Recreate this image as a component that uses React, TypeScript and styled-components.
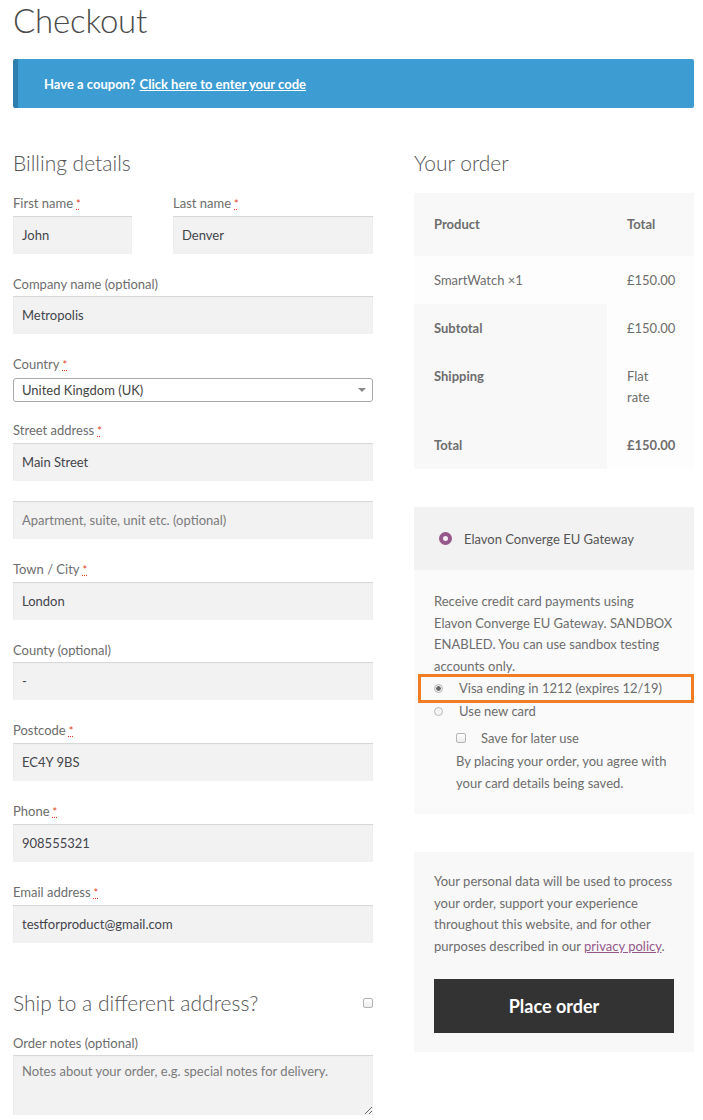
import React from 'react'
import styled, { createGlobalStyle } from 'styled-components'

const GlobalStyle = createGlobalStyle`
  * { box-sizing: border-box; }
  body {
    margin: 0;
    background: #ffffff;
    font-family: Lato, 'Open Sans', sans-serif;
    color: #6d6d6d;
  }
`

const Page = styled.div`
  width: 703px;
  padding: 0 9px 0 13px;
`

const PageTitle = styled.h1`
  margin: 0;
  font-size: 33px;
  font-weight: 300;
  line-height: 40px;
  color: #4a4a4a;
  letter-spacing: -0.2px;
`

const Coupon = styled.div`
  margin-top: 19px;
  height: 49px;
  display: flex;
  align-items: center;
  padding-left: 26px;
  background: #3d9cd2;
  border-left: 5px solid #2e7fb0;
  border-radius: 2px;
  font-size: 13px;
  font-weight: 700;
  color: #ffffff;

  a {
    color: #ffffff;
    text-decoration: underline;
    margin-left: 4px;
  }
`

const Columns = styled.div`
  display: grid;
  grid-template-columns: 360px 280px;
  column-gap: 41px;
  margin-top: 41px;
`

const Column = styled.div`
  display: flex;
  flex-direction: column;
`

const SectionTitle = styled.h3<{ $top?: number }>`
  margin: ${p => p.$top ?? 0}px 0 16px;
  font-size: 21px;
  font-weight: 300;
  line-height: 28px;
  color: #555555;
  display: flex;
  align-items: center;
  justify-content: space-between;
`

const Row = styled.div`
  display: grid;
  grid-template-columns: 119px 200px;
  column-gap: 41px;
`

const Field = styled.div<{ $gap?: number }>`
  display: flex;
  flex-direction: column;
  margin-bottom: ${p => p.$gap ?? 20}px;
`

const Label = styled.label`
  font-size: 13px;
  line-height: 20px;
  margin-bottom: 2px;
  color: #6d6d6d;

  abbr {
    color: #e2401c;
    text-decoration: underline dotted;
    margin-left: 3px;
    font-size: 11px;
  }
`

const Input = styled.input`
  height: 38px;
  width: 100%;
  border: 0;
  padding: 0 9px;
  background: #f2f2f2;
  box-shadow: inset 0 1px 1px rgba(0, 0, 0, 0.12);
  font-family: inherit;
  font-size: 13px;
  color: #43454b;
  outline: none;

  &::placeholder {
    color: #7b7b7b;
  }
`

const SelectBox = styled.div`
  margin-top: 1px;
  height: 24px;
  border: 1px solid #aaaaaa;
  border-radius: 3px;
  background: #ffffff;
  display: flex;
  align-items: center;
  justify-content: space-between;
  padding: 0 6px 0 8px;
  font-size: 13px;
  color: #444444;
`

const Caret = styled.span`
  width: 0;
  height: 0;
  border-left: 4px solid transparent;
  border-right: 4px solid transparent;
  border-top: 4px solid #888888;
`

const Checkbox = styled.span<{ $size?: number }>`
  display: inline-block;
  width: ${p => p.$size ?? 10}px;
  height: ${p => p.$size ?? 10}px;
  border: 1px solid #b5b5b5;
  border-radius: 2px;
  background: linear-gradient(#ffffff, #ececec);
`

const TextArea = styled.textarea`
  height: 60px;
  width: 100%;
  border: 0;
  padding: 8px 9px;
  background: #f2f2f2;
  box-shadow: inset 0 1px 1px rgba(0, 0, 0, 0.12);
  font-family: inherit;
  font-size: 13px;
  color: #43454b;
  outline: none;
  resize: vertical;

  &::placeholder {
    color: #7b7b7b;
  }
`

const OrderTable = styled.div`
  display: grid;
  grid-template-columns: 193px 87px;
  font-size: 13px;
  line-height: 21px;
`

const Cell = styled.div<{ $head?: boolean; $bold?: boolean; $bg: string }>`
  padding: ${p => (p.$head ? '21px' : '13.5px')} 20px;
  background: ${p => p.$bg};
  font-weight: ${p => (p.$bold ? 700 : 400)};
  color: #6d6d6d;
`

const PaymentBox = styled.div`
  margin-top: 38px;
  background: #fafafa;
`

const MethodHeader = styled.div`
  height: 63px;
  background: #f2f2f2;
  display: flex;
  align-items: center;
  padding-left: 25px;
  font-size: 13px;
  color: #555555;
`

const MethodRadio = styled.span`
  width: 13px;
  height: 13px;
  border-radius: 50%;
  border: 4px solid #96588a;
  background: #f5eef4;
  margin-right: 12px;
`

const MethodBody = styled.div`
  padding: 21px 20px 20px;
  font-size: 13px;
  line-height: 21.5px;
  color: #6d6d6d;
`

const Option = styled.div<{ $marked?: boolean }>`
  position: relative;
  display: flex;
  align-items: center;
  line-height: 23px;

  &::after {
    content: '';
    display: ${p => (p.$marked ? 'block' : 'none')};
    position: absolute;
    left: -16px;
    right: -20px;
    top: -3px;
    bottom: -3px;
    border: 3px solid #f07c26;
  }
`

const SmallRadio = styled.span<{ $checked?: boolean }>`
  width: 9px;
  height: 9px;
  border-radius: 50%;
  border: 1px solid #b8b8b8;
  background: ${p => (p.$checked ? 'radial-gradient(circle, #666 0 2px, #eee 2.5px)' : '#f4f4f4')};
  margin-right: 16px;
`

const Nested = styled.div`
  padding-left: 22px;
  line-height: 22px;
`

const SaveRow = styled.div`
  display: flex;
  align-items: center;
  gap: 15px;
  margin: 4px 0 1px;
  line-height: 22px;
`

const PrivacyBox = styled.div`
  margin-top: 38px;
  background: #f8f8f8;
  padding: 19px 20px 19px;
  font-size: 13px;
  line-height: 21.7px;
  color: #6d6d6d;

  a {
    color: #96588a;
    text-decoration: underline;
  }
`

const PlaceOrder = styled.button`
  margin-top: 21px;
  width: 100%;
  height: 54px;
  border: 0;
  background: #333333;
  color: #ffffff;
  font-family: inherit;
  font-size: 18px;
  font-weight: 700;
`

const Req = () => <abbr title="required">*</abbr>

export default function App() {
  return (
    <Page>
      <GlobalStyle />
      <PageTitle>Checkout</PageTitle>
      <Coupon>
        Have a coupon?<a href="#coupon">Click here to enter your code</a>
      </Coupon>

      <Columns>
        <Column>
          <SectionTitle>Billing details</SectionTitle>
          <Row>
            <Field>
              <Label>First name<Req /></Label>
              <Input defaultValue="John" />
            </Field>
            <Field>
              <Label>Last name<Req /></Label>
              <Input defaultValue="Denver" />
            </Field>
          </Row>
          <Field>
            <Label>Company name (optional)</Label>
            <Input defaultValue="Metropolis" />
          </Field>
          <Field $gap={18}>
            <Label>Country<Req /></Label>
            <SelectBox>
              United Kingdom (UK)
              <Caret />
            </SelectBox>
          </Field>
          <Field $gap={20}>
            <Label>Street address<Req /></Label>
            <Input defaultValue="Main Street" />
          </Field>
          <Field>
            <Input placeholder="Apartment, suite, unit etc. (optional)" />
          </Field>
          <Field>
            <Label>Town / City<Req /></Label>
            <Input defaultValue="London" />
          </Field>
          <Field>
            <Label>County (optional)</Label>
            <Input defaultValue="-" />
          </Field>
          <Field>
            <Label>Postcode<Req /></Label>
            <Input defaultValue="EC4Y 9BS" />
          </Field>
          <Field>
            <Label>Phone<Req /></Label>
            <Input defaultValue="908555321" />
          </Field>
          <Field $gap={0}>
            <Label>Email address<Req /></Label>
            <Input defaultValue="testforproduct@gmail.com" />
          </Field>

          <SectionTitle $top={46}>
            Ship to a different address?
            <Checkbox />
          </SectionTitle>
          <Field $gap={0}>
            <Label>Order notes (optional)</Label>
            <TextArea placeholder="Notes about your order, e.g. special notes for delivery." />
          </Field>
        </Column>

        <Column>
          <SectionTitle>Your order</SectionTitle>
          <OrderTable>
            <Cell $head $bold $bg="#f8f8f8">Product</Cell>
            <Cell $head $bold $bg="#f8f8f8">Total</Cell>
            <Cell $bg="#fdfdfd">SmartWatch&nbsp;×1</Cell>
            <Cell $bg="#fdfdfd">£150.00</Cell>
            <Cell $bold $bg="#f8f8f8">Subtotal</Cell>
            <Cell $bg="#fdfdfd">£150.00</Cell>
            <Cell $bold $bg="#f8f8f8">Shipping</Cell>
            <Cell $bg="#fdfdfd">Flat rate</Cell>
            <Cell $bold $bg="#f8f8f8">Total</Cell>
            <Cell $bold $bg="#fdfdfd">£150.00</Cell>
          </OrderTable>

          <PaymentBox>
            <MethodHeader>
              <MethodRadio />
              Elavon Converge EU Gateway
            </MethodHeader>
            <MethodBody>
              Receive credit card payments using Elavon Converge EU Gateway. SANDBOX ENABLED. You can use sandbox testing accounts only.
              <Option $marked>
                <SmallRadio $checked />
                Visa ending in 1212 (expires 12/19)
              </Option>
              <Option>
                <SmallRadio />
                Use new card
              </Option>
              <Nested>
                <SaveRow>
                  <Checkbox $size={10} />
                  Save for later use
                </SaveRow>
                By placing your order, you agree with your card details being saved.
              </Nested>
            </MethodBody>
          </PaymentBox>

          <PrivacyBox>
            Your personal data will be used to process your order, support your experience throughout this website, and for other purposes described in our <a href="#privacy">privacy policy</a>.
            <PlaceOrder>Place order</PlaceOrder>
          </PrivacyBox>
        </Column>
      </Columns>
    </Page>
  )
}
